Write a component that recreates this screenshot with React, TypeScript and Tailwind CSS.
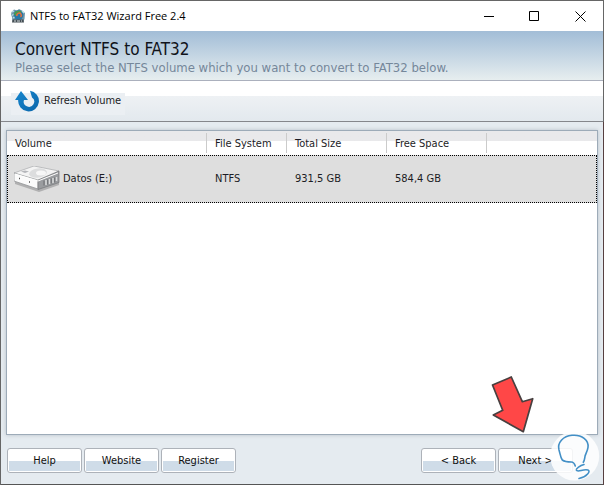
import type { ReactNode } from 'react';

interface Volume {
  name: string;
  fileSystem: string;
  total: string;
  free: string;
}

const volumes: Volume[] = [
  { name: 'Datos (E:)', fileSystem: 'NTFS', total: '931,5 GB', free: '584,4 GB' },
];

const columns = [
  { label: 'Volume', width: 'w-[200px]' },
  { label: 'File System', width: 'w-[80px]' },
  { label: 'Total Size', width: 'w-[100px]' },
  { label: 'Free Space', width: 'w-[100px]' },
];

function AppIcon() {
  return (
    <svg className="h-4 w-4" viewBox="0 0 16 16" aria-hidden="true">
      <path d="M1.500 4 4 1.500l3 1L9 1l3 1.500L15 5l-.5 6-1 2h-11l-.5-4L1 7z" fill="#6f97aa" />
      <circle cx="8.500" cy="7" r="4.800" fill="#2778a8" />
      <path d="M4 6c1-4 6-4 8-2L9.500 5 7 4.500 5.500 8z" fill="#4f9d45" />
      <path d="M7 8a2.200 2.200 0 1 1 3.500 1" fill="none" stroke="#e8703a" strokeWidth="1.500" />
      <path d="M2 4l2-1M1.500 7.500l2-1M12 3l2 2M3 10l1.500-1" stroke="#b9e0ea" strokeWidth="1.200" />
      <path d="M2.500 11.500h11l.5 3H2z" fill="#454e54" />
      <path d="M4 13h2m1 0h3m1 0h1" stroke="#d5dde0" />
    </svg>
  );
}

function RefreshIcon() {
  return (
    <svg className="h-6 w-6" viewBox="0 0 24 24" aria-hidden="true">
      <defs>
        <linearGradient id="refresh" x1="0" y1="0" x2="1" y2="1">
          <stop offset="0" stopColor="#1787cf" />
          <stop offset="1" stopColor="#0b66aa" />
        </linearGradient>
      </defs>
      <path d="M6 2 0 11h3.200A10.400 10.400 0 1 0 15 1.700L17 8.400A5.200 5.200 0 1 1 9 11h4z" fill="url(#refresh)" />
    </svg>
  );
}

function DriveIcon() {
  return (
    <svg className="h-[26px] w-[46px] shrink-0" viewBox="0 0 46 26" aria-hidden="true">
      <path d="M1 13v5l24 8 20-7v-5L25 20z" fill="#77787a" opacity=".45" />
      <path d="M0 7 20 0l25 5-20 11z" fill="#f4f4f4" stroke="#a9abad" strokeWidth=".7" />
      <path d="M0 7v8l24 8v-9z" fill="#fbfbfb" stroke="#8e9092" strokeWidth=".7" />
      <path d="M24 14v9.500l21-7V5z" fill="#9a9c9f" stroke="#75777a" strokeWidth=".7" />
      <ellipse cx="24" cy="7" rx="9" ry="4.500" fill="#dcddde" transform="rotate(-8 24 7)" />
      <ellipse cx="27" cy="7" rx="5" ry="2.500" fill="#f7f7f7" />
      <path d="M7 5.500l4-1 4 1-4 1.500z" fill="#b4b6ba" />
      <path d="m1 8 23 7 20-8" fill="none" stroke="#fff" />
      <path d="M5 12.500h1M15 16h1" stroke="#555" strokeWidth="1.500" />
      <path d="M32 14v5m3.500-6v5m3.500-6v5m3.500-6v4" stroke="#d9dadb" strokeWidth="1.500" />
      <path d="M30 14.500v5m3.700-6v5m3.500-6v5m3.500-6v5" stroke="#606265" strokeWidth=".8" />
    </svg>
  );
}

function WizardButton({ children }: { children: ReactNode }) {
  return (
    <button type="button" className="h-[25px] w-[75px] rounded-[3px] border border-[#adb2b9] bg-white p-px text-[#101010]">
      <span className="flex h-full items-center justify-center bg-linear-to-b from-white from-50% to-[#cfdce8] to-50%">
        {children}
      </span>
    </button>
  );
}

export default function App() {
  return (
    <div className="relative flex min-h-screen flex-col overflow-hidden border-l border-t border-[#666] bg-[#e5ebf0] font-['DejaVu_Sans_Condensed','DejaVu_Sans',sans-serif] text-[11px] leading-4 text-[#1c1c24]">
      <div className="border-r border-[#666]">
        <div className="flex h-[30px] items-center bg-white pl-[9px] font-['Open_Sans',sans-serif] text-[11px] text-black">
          <AppIcon />
          <span className="ml-1">NTFS to FAT32 Wizard Free 2.4</span>
          <div className="ml-auto flex">
            <button type="button" aria-label="Minimize" className="grid h-[29px] w-[45px] place-items-center">
              <svg className="h-[11px] w-[11px]" viewBox="0 0 11 11">
                <path d="M0 5.500h10" stroke="#000" />
              </svg>
            </button>
            <button type="button" aria-label="Maximize" className="grid h-[29px] w-[45px] place-items-center">
              <svg className="h-[11px] w-[11px]" viewBox="0 0 11 11">
                <path d="M.5.5h9v9h-9z" fill="none" stroke="#000" />
              </svg>
            </button>
            <button type="button" aria-label="Close" className="grid h-[29px] w-[46px] place-items-center">
              <svg className="h-[11px] w-[11px]" viewBox="0 0 11 11">
                <path d="m.5.5 10 10m0-10-10 10" stroke="#000" />
              </svg>
            </button>
          </div>
        </div>

        <header className="h-[50px] border-b border-[#abb0bd] bg-linear-to-b from-[#a2bdd7] to-[#e7eeef] pl-[14px] pt-2">
          <h1 className="text-[17px] leading-5 text-[#10131a]">Convert NTFS to FAT32</h1>
          <p className="text-[13px] leading-[18px] text-[#75879a]">
            Please select the NTFS volume which you want to convert to FAT32 below.
          </p>
        </header>

        <div className="flex h-[41px] items-center border-b border-[#85878c] bg-linear-to-b from-white from-[15px] via-[#eef1f4] via-[15px] to-[#e3e9ee] pl-[10px]">
          <button type="button" className="flex h-7 items-center gap-[5px] bg-linear-to-b from-transparent from-[6px] to-[#ebeff3] to-[6px] px-1">
            <RefreshIcon />
            <span>Refresh Volume</span>
          </button>
        </div>
      </div>

      <main className="flex flex-1 flex-col border-b border-r border-b-[#555] border-r-[#573f40] px-[5px] pt-2">
        <div className="flex-1 border border-[#9dabb8] bg-white shadow-[0_0_4px_#b9c0c9]">
          <table className="w-full table-fixed border-collapse text-left">
            <thead>
              <tr className="h-6 bg-linear-to-b from-[#e9e9eb] from-[10px] to-white to-[10px]">
                {columns.map((column) => (
                  <th key={column.label} className={`${column.width} p-0 font-normal`}>
                    <div className="h-5 border-r border-[#cbcbcb] pl-2 leading-[22px]">{column.label}</div>
                  </th>
                ))}
                <th className="p-0" />
              </tr>
            </thead>
            <tbody>
              {volumes.map((volume) => (
                <tr key={volume.name} className="h-12 bg-[#dedede] outline-1 -outline-offset-1 outline-dotted outline-black">
                  <td className="p-0 pl-[7px]">
                    <div className="flex items-center gap-[3px] leading-[18px]">
                      <DriveIcon />
                      {volume.name}
                    </div>
                  </td>
                  <td className="p-0 pl-2 leading-[18px]">{volume.fileSystem}</td>
                  <td className="p-0 pl-2 leading-[18px]">{volume.total}</td>
                  <td className="p-0 pl-2 leading-[18px]">{volume.free}</td>
                  <td className="p-0" />
                </tr>
              ))}
            </tbody>
          </table>
        </div>

        <footer className="flex gap-[2px] pb-[11px] pl-px pr-[25px] pt-[13px]">
          <WizardButton>Help</WizardButton>
          <WizardButton>Website</WizardButton>
          <WizardButton>Register</WizardButton>
          <div className="ml-auto flex gap-[2px]">
            <WizardButton>&lt; Back</WizardButton>
            <WizardButton>Next &gt;</WizardButton>
          </div>
        </footer>
      </main>

      {/* pointer to the Next button */}
      <svg className="pointer-events-none absolute bottom-[50px] right-[68px] h-[60px] w-[46px]" viewBox="0 0 46 60" aria-hidden="true">
        <path
          d="M2.500 10 21.300 2l11 24.700 10.400-3-9.400 33-30-16.700 9.400-4.700z"
          fill="#ff4747"
          stroke="#484040"
          strokeWidth="1.700"
          strokeLinejoin="round"
        />
      </svg>

      {/* light bulb badge */}
      <svg className="pointer-events-none absolute bottom-1 right-1 h-[52px] w-[52px]" viewBox="0 0 52 52" aria-hidden="true">
        <circle cx="26.700" cy="27" r="24.500" fill="#fff" fillOpacity=".85" />
        <path
          d="M27.300 37c-1-3-2-4-4-4-4 0-7-.5-9-2-2-3-2-6-3.300-10C9 14 15 7 24 6.300c10-1 17 5 16 12-.6 4-2.300 6-3 9-.5 3-.4 4-1.700 6"
          fill="none"
          stroke="#428fc6"
          strokeWidth="1.600"
          strokeLinecap="round"
          strokeLinejoin="round"
        />
        <path
          d="M36 35.500c-4 1-8 4-7.700 5.500 1 3 7-1.500 11.700 0 3 1-1 7-9 8.500"
          fill="none"
          stroke="#428fc6"
          strokeWidth="1.600"
          strokeLinecap="round"
        />
      </svg>
    </div>
  );
}
